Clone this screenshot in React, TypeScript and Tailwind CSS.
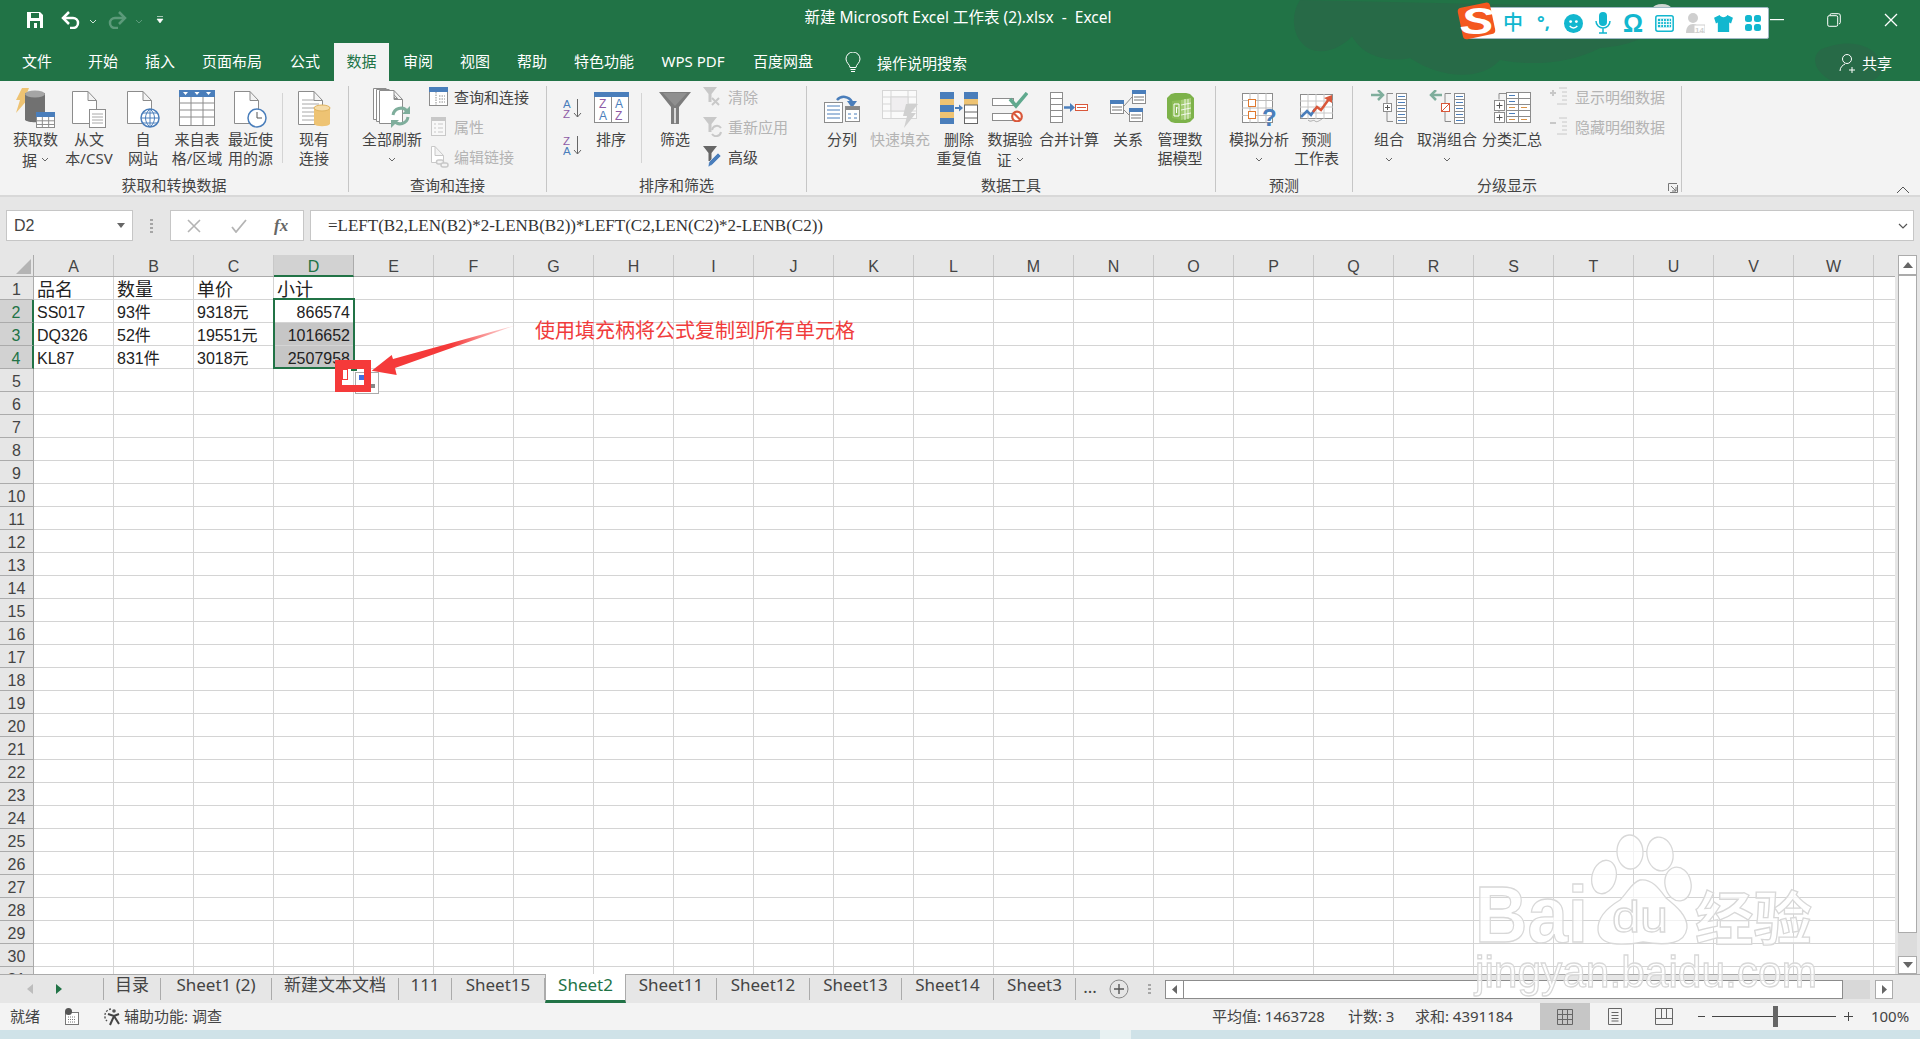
import type { ReactNode } from 'react';

const GRAY = '#8c8c8c';
const BLUE = '#4a7ebb';
const OFF = '#c8c8c8';

const Chevron = ({ color = '#666' }: { color?: string }) => (
  <svg width="8" height="5" viewBox="0 0 8 5" className="inline-block">
    <path d="M1 1l3 3 3-3" fill="none" stroke={color} strokeWidth="1" />
  </svg>
);

function MiniTable({ x, y, w, h, head = BLUE, line = GRAY }: { x: number; y: number; w: number; h: number; head?: string; line?: string }) {
  return (
    <g>
      <rect x={x + 0.5} y={y + 0.5} width={w - 1} height={h - 1} fill="#fff" stroke={line} />
      <rect x={x} y={y} width={w} height={5} fill={head} />
      <path d={`M${x} ${y + h * 0.55}H${x + w}M${x} ${y + h * 0.78}H${x + w}M${x + w / 3}  ${y + 5}V${y + h}M${x + (2 * w) / 3} ${y + 5}V${y + h}`} stroke={line} fill="none" />
    </g>
  );
}

const Doc = ({ x = 0, y = 0, w = 24, h = 40, c = GRAY }: { x?: number; y?: number; w?: number; h?: number; c?: string }) => (
  <path d={`M${x + 0.5} ${y + 0.5}H${x + w - 9}L${x + w - 0.5} ${y + 9.5}V${y + h - 0.5}H${x + 0.5}Z M${x + w - 9} ${y + 0.5}V${y + 9.5}H${x + w - 0.5}`} fill="#fff" stroke={c} />
);

const IconGetData = () => (
  <svg width="41" height="40" viewBox="0 0 41 40">
    <path d="M7 0h7l-4 10h4L1 25l4-13H1z" fill="#eec373" />
    <path d="M10 5h20v27c-3 3-17 3-20 0z" fill="#717171" />
    <ellipse cx="20" cy="6" rx="10" ry="3.5" fill="#a5a5a5" />
    <MiniTable x={21} y={24} w={19} h={16} />
  </svg>
);
const IconFromText = () => (
  <svg width="34" height="40" viewBox="0 0 34 40">
    <Doc y={3} w={25} h={33} />
    <rect x="17.5" y="21.5" width="16" height="18" fill="#fff" stroke={GRAY} />
    <path d="M20 26h11M20 29h11M20 32h11M20 35h11" stroke="#a8a8a8" />
  </svg>
);
const IconFromWeb = () => (
  <svg width="33" height="40" viewBox="0 0 33 40">
    <Doc y={3} w={25} h={33} />
    <circle cx="23" cy="30" r="9" fill="#fff" stroke={BLUE} strokeWidth="1.5" />
    <path d="M14 30h18M23 21v18M16 25h14M16 35h14M23 21c-6 5-6 13 0 18M23 21c6 5 6 13 0 18" stroke={BLUE} fill="none" />
  </svg>
);
const IconFromTable = () => (
  <svg width="36" height="38" viewBox="0 0 36 38">
    <rect x="0.5" y="2.5" width="35" height="35" fill="#fff" stroke={GRAY} />
    <rect y="2" width="36" height="7" fill={BLUE} />
    <path d="M4 4h5l-2.500 3zM15.500 4h5L18 7zM27 4h5l-2.500 3z" fill="#fff" />
    <path d="M0 15h36M0 22h36M0 29h36M12 9v29M24 9v29" stroke={GRAY} />
  </svg>
);
const IconRecent = () => (
  <svg width="33" height="40" viewBox="0 0 33 40">
    <Doc y={3} w={25} h={33} />
    <circle cx="23" cy="30" r="9" fill="#fff" stroke={BLUE} strokeWidth="1.5" />
    <path d="M23 24v6h5" stroke="#555" fill="none" />
  </svg>
);
const IconExisting = () => (
  <svg width="33" height="40" viewBox="0 0 33 40">
    <Doc y={3} w={25} h={34} />
    <path d="M4 12h12M4 16h17M4 20h12M4 24h12M4 28h12M4 32h12" stroke="#a8a8a8" />
    <path d="M16 19h16v17c-2 3-14 3-16 0z" fill="#eec373" />
    <ellipse cx="24" cy="20" rx="8" ry="3" fill="#f6dca8" stroke="#e0b35e" />
  </svg>
);
const IconRefresh = () => (
  <svg width="38" height="40" viewBox="0 0 38 40">
    <Doc x={0} y={0} w={22} h={32} />
    <Doc x={3} y={1} w={22} h={33} />
    <Doc x={6} y={2} w={24} h={34} />
    <g fill="none" stroke="#7fae9c" strokeWidth="3">
      <path d="M20 27a8 8 0 0 1 14-4" />
      <path d="M35 29a8 8 0 0 1-14 4" />
    </g>
    <path d="M37 18v8h-8zM18 40v-8h8z" fill="#7fae9c" />
  </svg>
);
const IconQueries = () => (
  <svg width="20" height="20" viewBox="0 0 20 20">
    <rect x="0.5" y="0.5" width="18" height="18" fill="#fff" stroke={GRAY} />
    <rect width="19" height="5" fill={BLUE} />
    <path d="M7 5v14M10 9h6M10 12h6M10 15h6" stroke={GRAY} strokeDasharray="1.500 1" />
  </svg>
);
const IconProps = () => (
  <svg width="20" height="20" viewBox="0 0 20 20">
    <rect x="2.500" y="0.5" width="14" height="18" fill="#f8f8f8" stroke={OFF} />
    <rect x="3" y="1" width="13" height="3" fill={OFF} />
    <path d="M5 7h2M9 7h5M5 11h2M9 11h5M5 15h2M9 15h5" stroke={OFF} />
  </svg>
);
const IconEditLinks = () => (
  <svg width="20" height="22" viewBox="0 0 20 22">
    <Doc x={2} y={0} w={13} h={17} c={OFF} />
    <rect x="7.500" y="14" width="7" height="4" rx="2" fill="#f3f3f3" stroke={OFF} strokeWidth="1.500" />
    <rect x="12" y="17" width="7" height="4" rx="2" fill="#f3f3f3" stroke={OFF} strokeWidth="1.500" />
  </svg>
);
const letter = { fontFamily: 'Liberation Sans, sans-serif' };
const IconSortAZ = ({ flip = false }: { flip?: boolean }) => (
  <svg width="20" height="21" viewBox="0 0 20 21">
    <text x="0" y="9.500" fontSize="11.500" fill={flip ? '#8e5ba6' : BLUE} style={letter}>{flip ? 'Z' : 'A'}</text>
    <text x="0" y="19.500" fontSize="11.500" fill={flip ? BLUE : '#8e5ba6'} style={letter}>{flip ? 'A' : 'Z'}</text>
    <path d="M14.500 1v18M11 15l3.500 4 3.500-4" fill="none" stroke="#666" />
  </svg>
);
const IconSort = () => (
  <svg width="35" height="31" viewBox="0 0 35 31" className="mt-[4px]">
    <rect x="0.5" y="0.5" width="34" height="30" fill="#fff" stroke={GRAY} />
    <rect width="35" height="5" fill={BLUE} />
    <path d="M17.500 5v26" stroke={GRAY} />
    <text x="5" y="16" fontSize="12" fill="#8e5ba6" style={letter}>Z</text>
    <text x="5" y="28" fontSize="12" fill={BLUE} style={letter}>A</text>
    <text x="21" y="16" fontSize="12" fill={BLUE} style={letter}>A</text>
    <text x="21" y="28" fontSize="12" fill="#8e5ba6" style={letter}>Z</text>
  </svg>
);
const IconFunnel = () => (
  <svg width="32" height="32" viewBox="0 0 32 32" className="mt-[4px]">
    <path d="M0 0h32L20 15v17h-8V15z" fill="#7c7c7c" />
    <path d="M15 16h2v16h-2zM4 1h24L16 14z" fill="#8f8f8f" />
    <rect x="15" y="16" width="2" height="15" fill="#d8d8d8" />
  </svg>
);
const SmallFunnel = ({ c }: { c: string }) => <path d="M0 0h14L8.500 7v8H5.500V7z" fill={c} />;
const IconClearF = () => (
  <svg width="20" height="20" viewBox="0 0 20 20">
    <SmallFunnel c={OFF} />
    <path d="M9 11l7 7M16 11l-7 7" stroke={OFF} strokeWidth="2" />
  </svg>
);
const IconReapply = () => (
  <svg width="20" height="20" viewBox="0 0 20 20">
    <SmallFunnel c={OFF} />
    <path d="M9 13a5 5 0 0 1 9-2M18 15a5 5 0 0 1-9 2" stroke={OFF} strokeWidth="2" fill="none" />
  </svg>
);
const IconAdvanced = () => (
  <svg width="20" height="22" viewBox="0 0 20 22">
    <SmallFunnel c="#666" />
    <path d="M5 21l1-5L15 7l3 3-9 9z" fill={BLUE} stroke="#fff" strokeWidth="0.5" />
  </svg>
);
const IconSplit = () => (
  <svg width="36" height="31" viewBox="0 0 36 31" className="mt-[4px]">
    <path d="M13 8a9 9 0 0 1 15 2" fill="none" stroke={BLUE} strokeWidth="2.500" />
    <path d="M23 9h10l-5 7z" fill={BLUE} />
    <rect x="0.5" y="10.500" width="18" height="20" fill="#fff" stroke={GRAY} />
    <path d="M3 14h13M3 18h13M3 22h13M3 26h13" stroke={BLUE} />
    <rect x="21.500" y="14.500" width="14" height="15" fill="#fff" stroke={GRAY} />
    <rect x="22" y="15" width="13" height="3" fill="#888" />
    <path d="M24 22h3M30 22h3M24 26h3M30 26h3" stroke={BLUE} />
  </svg>
);
const IconFlash = () => (
  <svg width="36" height="38" viewBox="0 0 36 38" className="mt-[2px]">
    <rect x="0.5" y="0.5" width="34" height="28" fill="#fafafa" stroke="#d6d6d6" />
    <path d="M0 7h35M0 14h35M0 21h35M9 0v29M26 0v29M9 10h17" stroke="#d6d6d6" />
    <rect x="9" y="7" width="17" height="14" fill="#f0eef0" stroke="#d6d6d6" />
    <path d="M24 14h12l-7 9h5L22 38l3-12h-4z" fill="#d0d0d0" />
  </svg>
);
const IconDedupe = () => (
  <svg width="38" height="32" viewBox="0 0 38 32" className="mt-[4px]">
    <rect x="0" y="0" width="14" height="32" fill={BLUE} />
    <rect x="0" y="7" width="14" height="6" fill="#eec373" />
    <rect x="0" y="20" width="14" height="6" fill="#eec373" />
    <rect x="24.500" y="0.500" width="13" height="31" fill="#fff" stroke="#666" />
    <rect x="24" y="0" width="14" height="7" fill={BLUE} />
    <rect x="24" y="7" width="14" height="6" fill="#eec373" />
    <path d="M24 13h14M24 20h14M24 26h14" stroke="#666" />
    <path d="M15 16h5" stroke={BLUE} strokeWidth="2" />
    <path d="M19 12.500l4 3.500-4 3.500z" fill={BLUE} />
  </svg>
);
const IconValidate = () => (
  <svg width="36" height="30" viewBox="0 0 36 30" className="mt-[4px]">
    <rect x="0.5" y="6.500" width="21" height="7" fill="#fff" stroke={GRAY} />
    <rect x="0.5" y="21.500" width="21" height="7" fill="#fff" stroke={GRAY} />
    <path d="M18 7l6 7L35 1" fill="none" stroke="#5fa98e" strokeWidth="3.500" />
    <circle cx="25" cy="24.500" r="4.800" fill="#fff" stroke="#d9573a" strokeWidth="2.200" />
    <path d="M22 21.500l6 6" stroke="#d9573a" strokeWidth="2.200" />
  </svg>
);
const IconConsolidate = () => (
  <svg width="38" height="31" viewBox="0 0 38 31" className="mt-[4px]">
    <rect x="0.5" y="0.5" width="12" height="30" fill="#fff" stroke={GRAY} />
    <path d="M0 6.500h12M0 12.500h12M0 18.500h12M0 24.500h12" stroke={GRAY} />
    <path d="M14 15.500h7" stroke={BLUE} strokeWidth="2.500" />
    <path d="M20 11l5 4.500-5 4.500z" fill={BLUE} />
    <rect x="25.500" y="12.500" width="12" height="6" fill="#fff" stroke="#d9573a" />
    <path d="M27 15.500h9" stroke="#d9573a" />
  </svg>
);
function MiniRel({ x, y, w }: { x: number; y: number; w: number }) {
  return (
    <g>
      <rect x={x + 0.5} y={y + 0.5} width={w - 1} height={13} fill="#fff" stroke={GRAY} />
      <rect x={x} y={y} width={w} height={4} fill={BLUE} />
      <path d={`M${x + 2} ${y + 7}h${w - 4}M${x + 2} ${y + 10}h${w - 4}`} stroke="#777" />
    </g>
  );
}
const IconRelations = () => (
  <svg width="36" height="32" viewBox="0 0 36 32" className="mt-[2px]">
    <path d="M14 16L22 7M14 20l7 7" stroke={GRAY} fill="none" />
    <MiniRel x={0} y={10} w={14} />
    <MiniRel x={22} y={0} w={14} />
    <MiniRel x={19} y={18} w={14} />
  </svg>
);
const IconModel = () => (
  <svg width="27" height="30" viewBox="0 0 27 30" className="mt-[5px]">
    <path d="M4 1c6-2 13-2 19 0l4 4v20l-4 4c-6 2-13 2-19 0l-4-4V5z" fill="#7db24a" />
    <path d="M14 7l10-2v20l-10 2z" fill="#a4cc74" />
    <path d="M5 8l9-1v20l-9-2z" fill="#8cbd56" />
    <path d="M14 12l10-2M14 17l10-2M14 22l10-2M18 6v21M21 6v20" stroke="#fff" strokeWidth="0.8" />
    <path d="M7 11h5v12H7z" fill="none" stroke="#fff" />
    <path d="M9.500 20v-6l1.500 1.500" stroke="#fff" fill="none" />
  </svg>
);
const IconWhatIf = () => (
  <svg width="34" height="35" viewBox="0 0 34 35" className="mt-[5px]">
    <rect x="0.5" y="0.5" width="30" height="29" fill="#fff" stroke={GRAY} />
    <path d="M0 7.500h31M0 15h31M0 22.500h31M8 0v30M16 0v30M24 0v30" stroke="#bdbdbd" />
    <rect x="6.500" y="6.500" width="7" height="7" fill="#fff" stroke="#e0792e" />
    <rect x="6.500" y="18.500" width="7" height="7" fill="#fff" stroke="#e0792e" />
    <text x="20" y="33" fontSize="24" fontWeight="700" fill={BLUE} style={letter}>?</text>
  </svg>
);
const IconForecast = () => (
  <svg width="33" height="29" viewBox="0 0 33 29" className="mt-[6px]">
    <rect x="0.5" y="0.5" width="32" height="24" fill="#fff" stroke={GRAY} />
    <path d="M0 7h33M0 13h33M0 19h33M8 0v25M16 0v25M24 0v25" stroke="#c8c8c8" />
    <path d="M1 23l6-6 4 4 4-6" fill="none" stroke={BLUE} strokeWidth="2.500" />
    <path d="M13 18l4-5 4 3 8-11" fill="none" stroke="#d9573a" strokeWidth="2.500" />
    <path d="M24 4l8-3v8z" fill="#d9573a" />
    <path d="M8 26c3 3 5-1 7 1s5-1 7-2" fill="none" stroke="#aaa" />
  </svg>
);
const Bracket = ({ minus = false }: { minus?: boolean }) => (
  <g>
    <path d="M22 3.500h-6v28h6" fill="none" stroke={GRAY} />
    <rect x="12.500" y="13.500" width="8" height="8" fill="#fff" stroke={minus ? '#d9573a' : GRAY} />
    {minus ? <path d="M13 21l7-7" stroke="#d9573a" /> : <path d="M14 17.500h5M16.500 15v5" stroke="#555" />}
    <rect x="25.500" y="3.500" width="10" height="30" fill="#fff" stroke={GRAY} />
    <path d="M25 9.500h11M25 15.500h11M25 21.500h11M25 27.500h11" stroke={GRAY} />
    <path d="M27 6.500h7M27 12.500h7M27 18.500h7M27 24.500h7M27 30.500h7" stroke={BLUE} />
  </g>
);
const IconGroup = () => (
  <svg width="36" height="34" viewBox="0 0 36 34" className="mt-[2px]">
    <path d="M0 5h11" stroke="#7fae9c" strokeWidth="2.500" />
    <path d="M7 0l5 5-5 5" fill="none" stroke="#7fae9c" strokeWidth="2.500" />
    <Bracket />
  </svg>
);
const IconUngroup = () => (
  <svg width="36" height="34" viewBox="0 0 36 34" className="mt-[2px]">
    <path d="M2 5h11" stroke="#7fae9c" strokeWidth="2.500" />
    <path d="M7 0L2 5l5 5" fill="none" stroke="#7fae9c" strokeWidth="2.500" />
    <Bracket minus />
  </svg>
);
const IconSubtotal = () => (
  <svg width="37" height="31" viewBox="0 0 37 31" className="mt-[4px]">
    <path d="M12 1.500H5v6M5 19v3" fill="none" stroke={GRAY} />
    <rect x="0.5" y="8.500" width="10" height="10" fill="#fff" stroke={GRAY} />
    <rect x="0.5" y="20.500" width="10" height="10" fill="#fff" stroke={GRAY} />
    <path d="M2.500 13.500h6M5.500 10.500v6M2.500 25.500h6M5.500 22.500v6" stroke="#555" />
    <rect x="12.500" y="0.5" width="24" height="30" fill="#fff" stroke={GRAY} />
    <path d="M12 6.500h25M12 12.500h25M12 18.500h25M12 24.500h25M24.500 0v31" stroke={GRAY} />
    <path d="M15 3.500h6M15 9.500h6M15 21.500h6" stroke={BLUE} />
    <path d="M15 15.500h6M27 15.500h6M15 27.500h6M27 27.500h6" stroke="#d99247" />
  </svg>
);
const IconDetail = ({ minus = false }: { minus?: boolean }) => (
  <svg width="20" height="20" viewBox="0 0 20 20">
    <path d="M0 6h6" stroke={OFF} strokeWidth="2" />
    {!minus && <path d="M3 3v6" stroke={OFF} strokeWidth="2" />}
    <path d="M9 1h8M12 5h5M12 9h5M12 13h5M7 17h10" stroke={OFF} />
  </svg>
);

const LINE2 = 'block h-[19px] leading-[19px]';

function Large({ w, icon, lines, chevron, off }: { w: string; icon: ReactNode; lines: string[]; chevron?: boolean; off?: boolean }) {
  return (
    <div className={`${w} flex shrink-0 flex-col items-center ${off ? 'text-[#b4b4b4]' : ''}`}>
      <div className="flex h-[44px] items-start justify-center pt-[2px]">{icon}</div>
      {lines.map((t, i) => (
        <span key={t} className={`${LINE2} whitespace-nowrap`}>
          {t}
          {chevron && i === lines.length - 1 && lines.length > 1 && (
            <span className="ml-[4px] align-[2px]"><Chevron /></span>
          )}
        </span>
      ))}
      {chevron && lines.length === 1 && <span className={`${LINE2}`}><Chevron /></span>}
    </div>
  );
}

function Small({ icon, text, off }: { icon: ReactNode; text: string; off?: boolean }) {
  return (
    <div className={`flex h-[30px] items-center whitespace-nowrap ${off ? 'text-[#b4b4b4]' : ''}`}>
      <span className="flex w-[25px] shrink-0 items-center">{icon}</span>
      {text}
    </div>
  );
}

function Group({ w, label, labelClass = '', children }: { w: string; label: string; labelClass?: string; children: ReactNode }) {
  return (
    <>
      <div className={`${w} flex h-[109px] shrink-0 flex-col`}>
        <div className="flex h-[89px]">{children}</div>
        <div className={`h-[20px] text-center leading-[20px] ${labelClass}`}>{label}</div>
      </div>
      <div className="h-[106px] w-px shrink-0 bg-[#c6c6c6]" />
    </>
  );
}

function Ribbon() {
  return (
    <div className="relative flex h-[116px] border-b-2 border-[#d8d8d8] bg-[#f3f3f3] pt-[5px] text-[15px] text-[#444]">
      <Group w="w-[348px]" label="获取和转换数据">
        <div className="w-[9px]" />
        <Large w="w-[53px]" icon={<IconGetData />} lines={['获取数', '据']} chevron />
        <Large w="w-[54px]" icon={<IconFromText />} lines={['从文', '本/CSV']} />
        <Large w="w-[54px]" icon={<IconFromWeb />} lines={['自', '网站']} />
        <Large w="w-[54px]" icon={<IconFromTable />} lines={['来自表', '格/区域']} />
        <Large w="w-[53px]" icon={<IconRecent />} lines={['最近使', '用的源']} />
        <div className="ml-[5px] mt-[7px] h-[70px] w-px bg-[#d4d4d4]" />
        <div className="w-[6px]" />
        <Large w="w-[50px]" icon={<IconExisting />} lines={['现有', '连接']} />
      </Group>
      <Group w="w-[197px]" label="查询和连接">
        <div className="w-[10px]" />
        <Large w="w-[66px]" icon={<IconRefresh />} lines={['全部刷新']} chevron />
        <div className="-mt-[4px] ml-[4px] flex flex-col">
          <Small icon={<IconQueries />} text="查询和连接" />
          <Small icon={<IconProps />} text="属性" off />
          <Small icon={<IconEditLinks />} text="编辑链接" off />
        </div>
      </Group>
      <Group w="w-[259px]" label="排序和筛选">
        <div className="ml-[13px] flex w-[26px] flex-col items-center gap-[16px] pt-[12px]">
          <IconSortAZ />
          <IconSortAZ flip />
        </div>
        <div className="w-[2px]" />
        <Large w="w-[46px]" icon={<IconSort />} lines={['排序']} />
        <div className="ml-[7px] mt-[7px] h-[70px] w-px bg-[#d4d4d4]" />
        <div className="w-[8px]" />
        <Large w="w-[50px]" icon={<IconFunnel />} lines={['筛选']} />
        <div className="-mt-[4px] ml-[3px] flex flex-col">
          <Small icon={<IconClearF />} text="清除" off />
          <Small icon={<IconReapply />} text="重新应用" off />
          <Small icon={<IconAdvanced />} text="高级" />
        </div>
      </Group>
      <Group w="w-[408px]" label="数据工具">
        <div className="w-[6px]" />
        <Large w="w-[58px]" icon={<IconSplit />} lines={['分列']} />
        <Large w="w-[58px]" icon={<IconFlash />} lines={['快速填充']} off />
        <Large w="w-[60px]" icon={<IconDedupe />} lines={['删除', '重复值']} />
        <Large w="w-[42px]" icon={<IconValidate />} lines={['数据验', '证']} chevron />
        <Large w="w-[76px]" icon={<IconConsolidate />} lines={['合并计算']} />
        <Large w="w-[42px]" icon={<IconRelations />} lines={['关系']} />
        <Large w="w-[62px]" icon={<IconModel />} lines={['管理数', '据模型']} />
      </Group>
      <Group w="w-[136px]" label="预测">
        <div className="w-[7px]" />
        <Large w="w-[72px]" icon={<IconWhatIf />} lines={['模拟分析']} chevron />
        <Large w="w-[43px]" icon={<IconForecast />} lines={['预测', '工作表']} />
      </Group>
      <Group w="w-[328px]" label="分级显示" labelClass="pr-[20px]">
        <div className="w-[10px]" />
        <Large w="w-[52px]" icon={<IconGroup />} lines={['组合']} chevron />
        <Large w="w-[64px]" icon={<IconUngroup />} lines={['取消组合']} chevron />
        <Large w="w-[66px]" icon={<IconSubtotal />} lines={['分类汇总']} />
        <div className="-mt-[4px] ml-[5px] flex flex-col">
          <Small icon={<IconDetail />} text="显示明细数据" off />
          <Small icon={<IconDetail minus />} text="隐藏明细数据" off />
        </div>
      </Group>
      {/* dialog launcher + collapse */}
      <svg width="10" height="10" viewBox="0 0 10 10" className="absolute left-[1668px] top-[102px]">
        <path d="M0.500 8V0.500H9M3 3l5 5M8 4v4H4M9.500 2v7.500H2" fill="none" stroke="#777" />
      </svg>
      <svg width="14" height="8" viewBox="0 0 14 8" className="absolute left-[1896px] top-[105px]">
        <path d="M1 7l6-6 6 6" fill="none" stroke="#555" />
      </svg>
    </div>
  );
}

function TitleBar() {
  return (
    <div className="relative h-[81px] overflow-hidden bg-[#217346] text-white">
      {/* theme pattern, barely darker than the bar */}
      <svg width="660" height="81" viewBox="0 0 660 81" className="absolute right-0 top-0">
        <path d="M40 0c-10 15-8 38 8 48 14 8 34 0 44-12 10 20 36 27 58 22 30 20 70 24 90 2 30 6 70 4 100-12 30-2 60-12 70-40z" fill="#276a47" />
        <path d="M560 50c20-10 50-10 60 10 6 12-2 21-14 21h-34c-16-8-22-22-12-31z" fill="#276a47" />
        <ellipse cx="402" cy="8" rx="9" ry="4" fill="#cfd6d2" />
      </svg>
      <div className="relative grid h-[40px] grid-cols-[1fr_auto_1fr] items-center">
        <div className="flex items-center">
          <svg width="18" height="18" viewBox="0 0 18 18" className="ml-[26px]">
            <path d="M1 1h13l3 3v13H1z" fill="#fff" />
            <rect x="5" y="2" width="8" height="5" fill="#217346" />
            <rect x="4" y="10" width="10" height="7" fill="#217346" />
            <rect x="8" y="12" width="3" height="5" fill="#fff" />
          </svg>
          <svg width="20" height="18" viewBox="0 0 20 18" className="ml-[17px]">
            <path d="M3 7h9a5 5 0 0 1 0 10H9" fill="none" stroke="#fff" strokeWidth="2.500" />
            <path d="M8 1L2 7l6 6" fill="none" stroke="#fff" strokeWidth="2.500" />
          </svg>
          <span className="ml-[8px]"><Chevron color="#cfe3d8" /></span>
          <svg width="20" height="18" viewBox="0 0 20 18" className="ml-[10px]">
            <path d="M17 7H8a5 5 0 0 0 0 10h3" fill="none" stroke="#5c9a7a" strokeWidth="2.500" />
            <path d="M12 1l6 6-6 6" fill="none" stroke="#5c9a7a" strokeWidth="2.500" />
          </svg>
          <span className="ml-[8px]"><Chevron color="#5c9a7a" /></span>
          <svg width="8" height="8" viewBox="0 0 8 8" className="ml-[13px]">
            <path d="M1 0.500h6M1 3h6l-3 4z" fill="#fff" stroke="#fff" strokeWidth="0.6" />
          </svg>
        </div>
        <div className="-mt-[5px] -translate-x-[2px] whitespace-pre text-[15.5px]">新建 Microsoft Excel 工作表 (2).xlsx  -  Excel</div>
        <div className="flex items-center justify-end pr-[22px]">
          <svg width="14" height="2" viewBox="0 0 14 2" className="mr-[43px]"><rect width="14" height="1.200" fill="#fff" /></svg>
          <svg width="14" height="14" viewBox="0 0 14 14" className="mr-[43px]">
            <rect x="0.700" y="2.700" width="10" height="10.600" rx="1.500" fill="none" stroke="#fff" />
            <path d="M3 2.500V2a1.300 1.300 0 0 1 1.300-1.300h7A2 2 0 0 1 13.300 3v6.500a1.300 1.300 0 0 1-1.300 1.300" fill="none" stroke="#fff" />
          </svg>
          <svg width="14" height="14" viewBox="0 0 14 14"><path d="M1 1l12 12M13 1L1 13" stroke="#fff" strokeWidth="1.300" /></svg>
        </div>
      </div>
      <div className="relative flex h-[41px] items-end text-[15px]">
        {[
          ['文件', 'w-[74px]'],
          ['开始', 'w-[58px]'],
          ['插入', 'w-[56px]'],
          ['页面布局', 'w-[88px]'],
          ['公式', 'w-[58px]'],
        ].map(([t, w]) => (
          <div key={t} className={`${w} h-[38px] text-center leading-[36px]`}>{t}</div>
        ))}
        <div className="h-[38px] w-[55px] bg-[#f3f3f3] text-center leading-[36px] text-[#217346]">数据</div>
        {[
          ['审阅', 'w-[58px]'],
          ['视图', 'w-[56px]'],
          ['帮助', 'w-[58px]'],
          ['特色功能', 'w-[86px]'],
          ['WPS PDF', 'w-[92px]'],
          ['百度网盘', 'w-[88px]'],
        ].map(([t, w]) => (
          <div key={t} className={`${w} h-[38px] text-center leading-[36px]`}>{t}</div>
        ))}
        <div className="flex h-[36px] items-center">
          <svg width="16" height="22" viewBox="0 0 16 22" className="ml-[18px] mr-[16px]">
            <path d="M5 15.500c0-3-4-4.500-4-8.500a7 7 0 0 1 14 0c0 4-4 5.500-4 8.500z" fill="none" stroke="#fff" />
            <path d="M5.500 17.500h5M6 19.500h4" stroke="#fff" />
          </svg>
          操作说明搜索
        </div>
        <div className="ml-auto flex h-[36px] items-center pr-[28px]">
          <svg width="18" height="20" viewBox="0 0 18 20" className="mr-[5px]">
            <circle cx="8" cy="6" r="4.500" fill="none" stroke="#fff" />
            <path d="M1 18c0-4 3-6 5-7M13 14v6M10 17h6" fill="none" stroke="#fff" />
          </svg>
          共享
        </div>
      </div>
      {/* sogou input bar floats over the title bar */}
      <div className="absolute left-[1468px] top-[7px] flex h-[32px] w-[301px] items-center rounded-[2px] border border-[#9fb9c4] bg-white text-[#12b7cf]">
        <span className="absolute left-[34px] text-[20px] leading-none [font-weight:500]">中</span>
        <span className="absolute left-[68px] top-0 text-[18px] font-bold leading-[28px]">°,</span>
        <svg width="19" height="19" viewBox="0 0 20 20" className="absolute left-[95px]">
          <circle cx="10" cy="10" r="10" fill="#12b7cf" />
          <circle cx="7" cy="8" r="1.500" fill="#fff" />
          <circle cx="13" cy="8" r="1.500" fill="#fff" />
          <path d="M6 12.500c2 3 6 3 8 0" fill="none" stroke="#fff" strokeWidth="1.500" />
        </svg>
        <svg width="16" height="22" viewBox="0 0 16 22" className="absolute left-[126px]">
          <rect x="4" y="0" width="8" height="14" rx="4" fill="#12b7cf" />
          <path d="M1 9a7 7 0 0 0 14 0M8 16v5M4 21h8" fill="none" stroke="#12b7cf" strokeWidth="1.500" />
        </svg>
        <span className="absolute left-[154px] font-['Liberation_Sans',sans-serif] text-[25px] font-bold leading-none">Ω</span>
        <svg width="19" height="17" viewBox="0 0 20 18" className="absolute left-[186px]">
          <rect x="0.800" y="0.800" width="18.400" height="16.400" rx="2" fill="none" stroke="#12b7cf" strokeWidth="1.600" />
          <path d="M3 4h14v9H3z" fill="#12b7cf" />
          <path d="M3 7h14M3 10h14M6 4v9M9 4v9M12 4v9M15 4v9" stroke="#fff" />
        </svg>
        <svg width="20" height="20" viewBox="0 0 20 20" className="absolute left-[216px]">
          <circle cx="8" cy="5" r="5" fill="#cfcfcf" />
          <path d="M1 20c0-6 3-9 7-9s7 3 7 9z" fill="#cfcfcf" />
          <rect x="9" y="12" width="11" height="8" fill="#fff" stroke="#cfcfcf" />
          <text x="10" y="19.500" fontSize="8" fontWeight="700" fill="#cfcfcf" fontFamily="Liberation Sans, sans-serif">14</text>
        </svg>
        <svg width="19" height="17" viewBox="0 0 20 18" className="absolute left-[245px]">
          <path d="M6 0c1 3 7 3 8 0l6 3-2 6-2-1v10H4V8L2 9 0 3z" fill="#12b7cf" />
        </svg>
        <svg width="16" height="16" viewBox="0 0 16 16" className="absolute left-[276px]">
          <rect x="0" y="0" width="7" height="7" rx="2.500" fill="#12b7cf" />
          <rect x="9" y="0" width="7" height="7" rx="2.500" fill="#12b7cf" />
          <rect x="0" y="9" width="7" height="7" rx="2.500" fill="#12b7cf" />
          <rect x="9" y="9" width="7" height="7" rx="2.500" fill="#12b7cf" />
        </svg>
      </div>
      <svg width="42" height="42" viewBox="0 0 42 42" className="absolute left-[1456px] top-0">
        <rect x="4" y="5" width="33" height="32" rx="4" transform="rotate(-12 20 21)" fill="#f4581f" />
        <text x="4" y="34" fontSize="36" fontWeight="900" fontStyle="italic" fill="#fff" fontFamily="Liberation Sans, sans-serif" textLength="34" lengthAdjust="spacingAndGlyphs">S</text>
      </svg>
    </div>
  );
}

function FormulaBar() {
  return (
    <div className="flex h-[58px] items-start bg-[#e6e6e6] pl-[6px] pt-[13px]">
      <div className="flex h-[31px] w-[127px] items-center justify-between border border-[#c6c6c6] bg-white px-[7px] font-['Liberation_Sans',sans-serif] text-[16px] text-[#444]">
        D2
        <svg width="8" height="5" viewBox="0 0 8 5"><path d="M0 0h8L4 5z" fill="#666" /></svg>
      </div>
      <div className="flex h-[31px] w-[37px] flex-col items-center justify-center gap-[2px]">
        <i className="h-[2px] w-[3px] bg-[#a6a6a6]" />
        <i className="h-[2px] w-[3px] bg-[#a6a6a6]" />
        <i className="h-[2px] w-[3px] bg-[#a6a6a6]" />
        <i className="h-[2px] w-[3px] bg-[#a6a6a6]" />
      </div>
      <div className="flex h-[31px] w-[134px] items-center border border-[#c6c6c6] bg-white pl-[16px]">
        <svg width="14" height="14" viewBox="0 0 14 14"><path d="M1 1l12 12M13 1L1 13" stroke="#b4b4b4" strokeWidth="1.600" /></svg>
        <svg width="16" height="14" viewBox="0 0 16 14" className="ml-[30px]"><path d="M1 8l4 5L15 1" fill="none" stroke="#b4b4b4" strokeWidth="1.800" /></svg>
        <span className="ml-[27px] font-['Liberation_Serif',serif] text-[17px] font-bold italic text-[#666]">fx</span>
      </div>
      <div className="ml-[6px] flex h-[31px] w-[1604px] items-center justify-between border border-[#c6c6c6] bg-white pl-[17px] pr-[5px] font-['Liberation_Serif','Noto_Sans_CJK_SC',serif] text-[17px] text-[#333]">
        =LEFT(B2,LEN(B2)*2-LENB(B2))*LEFT(C2,LEN(C2)*2-LENB(C2))
        <svg width="10" height="6" viewBox="0 0 10 6"><path d="M1 1l4 4 4-4" fill="none" stroke="#555" strokeWidth="1.200" /></svg>
      </div>
    </div>
  );
}

const COLS = 'ABCDEFGHIJKLMNOPQRSTUVW'.split('');
const ROWS = Array.from({ length: 31 }, (_, i) => i + 1);
const DATA: Record<number, string[]> = {
  1: ['品名', '数量', '单价', '小计'],
  2: ['SS017', '93件', '9318元', '866574'],
  3: ['DQ326', '52件', '19551元', '1016652'],
  4: ['KL87', '831件', '3018元', '2507958'],
};

function Sheet() {
  return (
    <div className="flex h-[719px] bg-[#e6e6e6]">
      <div className="w-[1895px] shrink-0 overflow-hidden bg-white font-['Liberation_Sans','Noto_Sans_CJK_SC',sans-serif] text-[16px]">
        <div className="flex h-[22px] border-b border-[#ababab] bg-[#e6e6e6] text-[#444]">
          <div className="flex w-[34px] shrink-0 items-end justify-end border-r border-[#ababab]">
            <svg width="15" height="15" viewBox="0 0 15 15" className="mb-[2px] mr-[2px]"><path d="M15 0v15H0z" fill="#b4b4b4" /></svg>
          </div>
          {COLS.map((c) => (
            <div
              key={c}
              className={
                c === 'D'
                  ? 'h-[22px] w-[80px] shrink-0 border-b-2 border-r border-[#217346] border-r-[#ababab] bg-[#d2d2d2] text-center leading-[24px] text-[#217346]'
                  : 'w-[80px] shrink-0 border-r border-[#c8c8c8] text-center leading-[24px]'
              }
            >
              {c}
            </div>
          ))}
          <div className="flex-1" />
        </div>
        {ROWS.map((r) => {
          const sel = r >= 2 && r <= 4;
          return (
            <div key={r} className="flex h-[23px]">
              <div
                className={
                  sel
                    ? 'w-[34px] shrink-0 border-b border-r-2 border-[#ababab] border-r-[#217346] bg-[#d2d2d2] text-center leading-[25px] text-[#217346]'
                    : 'w-[34px] shrink-0 border-b border-r border-[#ababab] bg-[#e6e6e6] text-center leading-[25px] text-[#444]'
                }
              >
                {r}
              </div>
              {COLS.map((c, i) => {
                const v = DATA[r]?.[i];
                const num = i === 3 && r > 1;
                const shade = i === 3 && r > 2 && r < 5;
                return (
                  <div
                    key={c}
                    className={`flex w-[80px] shrink-0 items-end whitespace-nowrap border-b border-r border-[#d4d4d4] leading-[18px] text-[#222] ${num ? 'justify-end pr-[3px]' : 'pl-[3px]'} ${shade ? 'bg-[#c6c6c6]' : ''} ${r === 1 ? 'text-[18px]' : ''}`}
                  >
                    {v}
                  </div>
                );
              })}
              <div className="flex-1 border-b border-[#d4d4d4]" />
            </div>
          );
        })}
      </div>
      <div className="flex w-[25px] shrink-0 flex-col pl-[3px] pr-[3px]">
        <div className="flex h-[20px] items-center justify-center border border-[#ababab] bg-white">
          <svg width="10" height="6" viewBox="0 0 10 6"><path d="M5 0l5 6H0z" fill="#666" /></svg>
        </div>
        <div className="h-[658px] border border-[#ababab] bg-white" />
        <div className="flex-1 bg-[#dcdcdc]" />
        <div className="flex h-[18px] items-center justify-center border border-[#ababab] bg-white">
          <svg width="10" height="6" viewBox="0 0 10 6"><path d="M0 0h10L5 6z" fill="#666" /></svg>
        </div>
      </div>
    </div>
  );
}

const TABS = [
  ['目录', 'w-[57px]'],
  ['Sheet1 (2)', 'w-[111px]'],
  ['新建文本文档', 'w-[127px]'],
  ['111', 'w-[53px]'],
  ['Sheet15', 'w-[93px]'],
];
const TABS2 = [
  ['Sheet11', 'w-[91px]'],
  ['Sheet12', 'w-[93px]'],
  ['Sheet13', 'w-[92px]'],
  ['Sheet14', 'w-[92px]'],
  ['Sheet3', 'w-[82px]'],
];

function TabBar() {
  return (
    <div className="flex h-[29px] items-stretch border-t border-[#ababab] bg-[#e6e6e6] text-[17px] text-[#444]">
      <div className="my-[3px] flex w-[104px] shrink-0 items-center border-r border-[#ababab]">
        <svg width="6" height="10" viewBox="0 0 6 10" className="ml-[27px]"><path d="M6 0v10L0 5z" fill="#bdbdbd" /></svg>
        <svg width="6" height="10" viewBox="0 0 6 10" className="ml-[23px]"><path d="M0 0v10l6-5z" fill="#217346" /></svg>
      </div>
      {TABS.map(([t, w]) => (
        <div key={t} className={`${w} my-[3px] shrink-0 whitespace-nowrap border-r border-[#ababab] text-center leading-[14px] last:border-r-0`}>{t}</div>
      ))}
      <div className="-mt-px w-[81px] shrink-0 border-b-[3px] border-l border-r border-[#ababab] border-b-[#217346] bg-white text-center leading-[22px] text-[#217346]">Sheet2</div>
      {TABS2.map(([t, w]) => (
        <div key={t} className={`${w} my-[3px] shrink-0 whitespace-nowrap border-r border-[#ababab] text-center leading-[14px]`}>{t}</div>
      ))}
      <div className="my-[3px] w-[28px] shrink-0 text-center leading-[18px]">...</div>
      <div className="flex w-[30px] shrink-0 items-center justify-center">
        <svg width="20" height="20" viewBox="0 0 20 20">
          <circle cx="10" cy="10" r="9" fill="none" stroke="#888" />
          <path d="M10 5v10M5 10h10" stroke="#555" strokeWidth="1.400" />
        </svg>
      </div>
      <div className="flex w-[31px] shrink-0 flex-col items-center justify-center gap-[2px]">
        <i className="h-[2px] w-[3px] bg-[#a6a6a6]" />
        <i className="h-[2px] w-[3px] bg-[#a6a6a6]" />
        <i className="h-[2px] w-[3px] bg-[#a6a6a6]" />
      </div>
      <div className="flex w-[728px] shrink-0 items-center">
        <div className="flex h-[19px] w-[19px] shrink-0 items-center justify-center border border-[#8c8c8c] bg-white">
          <svg width="5" height="9" viewBox="0 0 5 9"><path d="M5 0v9L0 4.500z" fill="#666" /></svg>
        </div>
        <div className="h-[19px] w-[659px] border-y border-r border-[#8c8c8c] bg-white" />
        <div className="h-[19px] w-[27px] bg-[#d8d8d8]" />
        <div className="ml-[5px] flex h-[19px] w-[18px] shrink-0 items-center justify-center border border-[#ababab] bg-white">
          <svg width="5" height="9" viewBox="0 0 5 9"><path d="M0 0v9l5-4.500z" fill="#666" /></svg>
        </div>
      </div>
    </div>
  );
}

function StatusBar() {
  return (
    <div className="flex h-[27px] items-center bg-[#f3f3f3] text-[15px] text-[#444]">
      <span className="ml-[10px]">就绪</span>
      <svg width="14" height="17" viewBox="0 0 14 17" className="ml-[25px]">
        <rect x="0.500" y="4.500" width="13" height="12" fill="#fff" stroke="#777" />
        <circle cx="3.500" cy="3.500" r="3.500" fill="#555" />
        <path d="M3 9h8M3 11.500h8M3 14h8" stroke="#777" strokeDasharray="1 1" />
      </svg>
      <svg width="19" height="19" viewBox="0 0 19 19" className="ml-[24px]">
        <path d="M8 2a7 7 0 0 0-4 12" fill="none" stroke="#555" strokeDasharray="2 1.500" strokeWidth="1.400" />
        <circle cx="11" cy="4" r="1.800" fill="#555" />
        <path d="M5 7l6 2 5-2M11 9l-4 9M11 9l5 8" fill="none" stroke="#444" strokeWidth="2" />
      </svg>
      <span className="ml-[2px] whitespace-nowrap">辅助功能: 调查</span>
      <span className="ml-[990px] w-[136px] whitespace-nowrap">平均值: 1463728</span>
      <span className="w-[67px] whitespace-nowrap">计数: 3</span>
      <span className="w-[125px] whitespace-nowrap">求和: 4391184</span>
      <div className="flex h-[27px] w-[50px] items-center justify-center bg-[#c6c6c6]">
        <svg width="16" height="16" viewBox="0 0 16 16"><path d="M0.500 0.500h15v15h-15zM5.500 0v16M10.500 0v16M0 5.500h16M0 10.500h16" fill="none" stroke="#666" /></svg>
      </div>
      <svg width="16" height="17" viewBox="0 0 16 17" className="ml-[17px]">
        <path d="M1.500 0.500h13v16h-13zM4.500 4.500h7M4.500 7.500h7M4.500 10.500h7M4.500 13h7" fill="none" stroke="#666" />
      </svg>
      <svg width="18" height="17" viewBox="0 0 18 17" className="ml-[32px]">
        <path d="M0.500 0.500h17v16H0.500zM0.500 10.500h17M6.500 0.500v10M11.500 0.500v10" fill="none" stroke="#666" />
      </svg>
      <span className="ml-[25px] h-px w-[7px] bg-[#444]" />
      <div className="relative ml-[7px] h-px w-[124px] bg-[#444]">
        <span className="absolute left-[61px] top-[-10px] h-[21px] w-[5px] bg-[#666]" />
      </div>
      <svg width="11" height="11" viewBox="0 0 11 11" className="ml-[7px]"><path d="M5.500 1v9M1 5.500h9" stroke="#444" /></svg>
      <span className="ml-[17px]">100%</span>
    </div>
  );
}

function Overlays() {
  return (
    <>
      <div className="absolute left-[273px] top-[298px] h-[71px] w-[82px] border-2 border-[#217346]" />
      <div className="absolute left-[351px] top-[365px] h-[6px] w-[6px] bg-[#217346]" />
      {/* autofill options button */}
      <div className="absolute left-[355px] top-[372px] h-[22px] w-[24px] border border-[#ababab] bg-white">
        <i className="absolute left-[3px] top-[2px] h-[5px] w-[5px] bg-[#3f6fe0]" />
        <i className="absolute left-[8px] top-[2px] h-[5px] w-[7px] border border-[#999]" />
        <i className="absolute left-[3px] top-[12px] h-[2px] w-[12px] bg-[#ccc]" />
        <i className="absolute left-[15px] top-[11px] h-[4px] w-[4px] bg-[#888]" />
      </div>
      {/* red annotation */}
      <div className="absolute left-[335px] top-[360px] h-[32px] w-[36px] border-x-[7px] border-b-[7px] border-t-[9px] border-[#f53a3a]" />
      <div className="absolute left-[342px] top-[369px] h-[11px] w-[6px] border border-[#f53a3a] bg-white" />
      <svg width="170" height="60" viewBox="360 320 170 60" className="absolute left-[360px] top-[320px]">
        <defs>
          <linearGradient id="arrowFade" x1="0" x2="1" y1="0" y2="0">
            <stop offset="0.55" stopColor="#f53a3a" />
            <stop offset="1" stopColor="#f53a3a" stopOpacity="0.1" />
          </linearGradient>
        </defs>
        <polygon points="371.700,370.700 391.700,355 393,359 516.700,325 395,368 396.700,375" fill="url(#arrowFade)" />
      </svg>
      <div className="absolute left-[535px] top-[316px] whitespace-nowrap font-['Noto_Sans_CJK_SC',sans-serif] text-[20px] leading-[28px] text-[#f03c3c]">使用填充柄将公式复制到所有单元格</div>
      {/* baidu watermark sits over everything */}
      <svg width="370" height="180" viewBox="1460 825 370 180" className="pointer-events-none absolute left-[1460px] top-[825px] blur-[0.4px]" style={{ fontFamily: 'Liberation Sans, sans-serif' }}>
        <g fill="#ffffff" fillOpacity="0.7" stroke="#d8d8d8" strokeWidth="1.300">
          <text x="1475" y="942" fontSize="80" fontWeight="700" textLength="113" lengthAdjust="spacingAndGlyphs">Bai</text>
          <text x="1695" y="940" fontSize="58" fontWeight="700" fontFamily="Noto Sans CJK SC, sans-serif" textLength="117" lengthAdjust="spacingAndGlyphs">经验</text>
          <ellipse cx="1604" cy="877" rx="12" ry="17" transform="rotate(15 1604 877)" />
          <ellipse cx="1630" cy="852" rx="13" ry="17" transform="rotate(-3 1630 852)" />
          <ellipse cx="1660" cy="854" rx="13" ry="17" transform="rotate(-10 1660 854)" />
          <ellipse cx="1678" cy="884" rx="13" ry="17" transform="rotate(-12 1678 884)" />
          <path d="M1640 880c12-2 20 10 26 18 10 8 22 18 21 30-2 16-20 18-44 14-22 4-44 4-45-12-1-14 12-24 22-30 8-8 12-18 20-20z" />
          <text x="1612" y="932" fontSize="44" textLength="56" lengthAdjust="spacingAndGlyphs">du</text>
          <text x="1475" y="987" fontSize="44" textLength="342" lengthAdjust="spacingAndGlyphs">jingyan.baidu.com</text>
        </g>
      </svg>
    </>
  );
}

export default function App() {
  return (
    <div className="relative h-[1039px] w-[1920px] overflow-hidden font-['Noto_Sans','Noto_Sans_CJK_SC',sans-serif]">
      <TitleBar />
      <Ribbon />
      <FormulaBar />
      <Sheet />
      <TabBar />
      <StatusBar />
      <div className="flex h-[9px]">
        <div className="w-[1100px] bg-[#cfe2e8]" />
        <div className="w-[31px] bg-[#e8f1f2]" />
        <div className="flex-1 bg-[#cfe2e8]" />
      </div>
      <Overlays />
    </div>
  );
}
